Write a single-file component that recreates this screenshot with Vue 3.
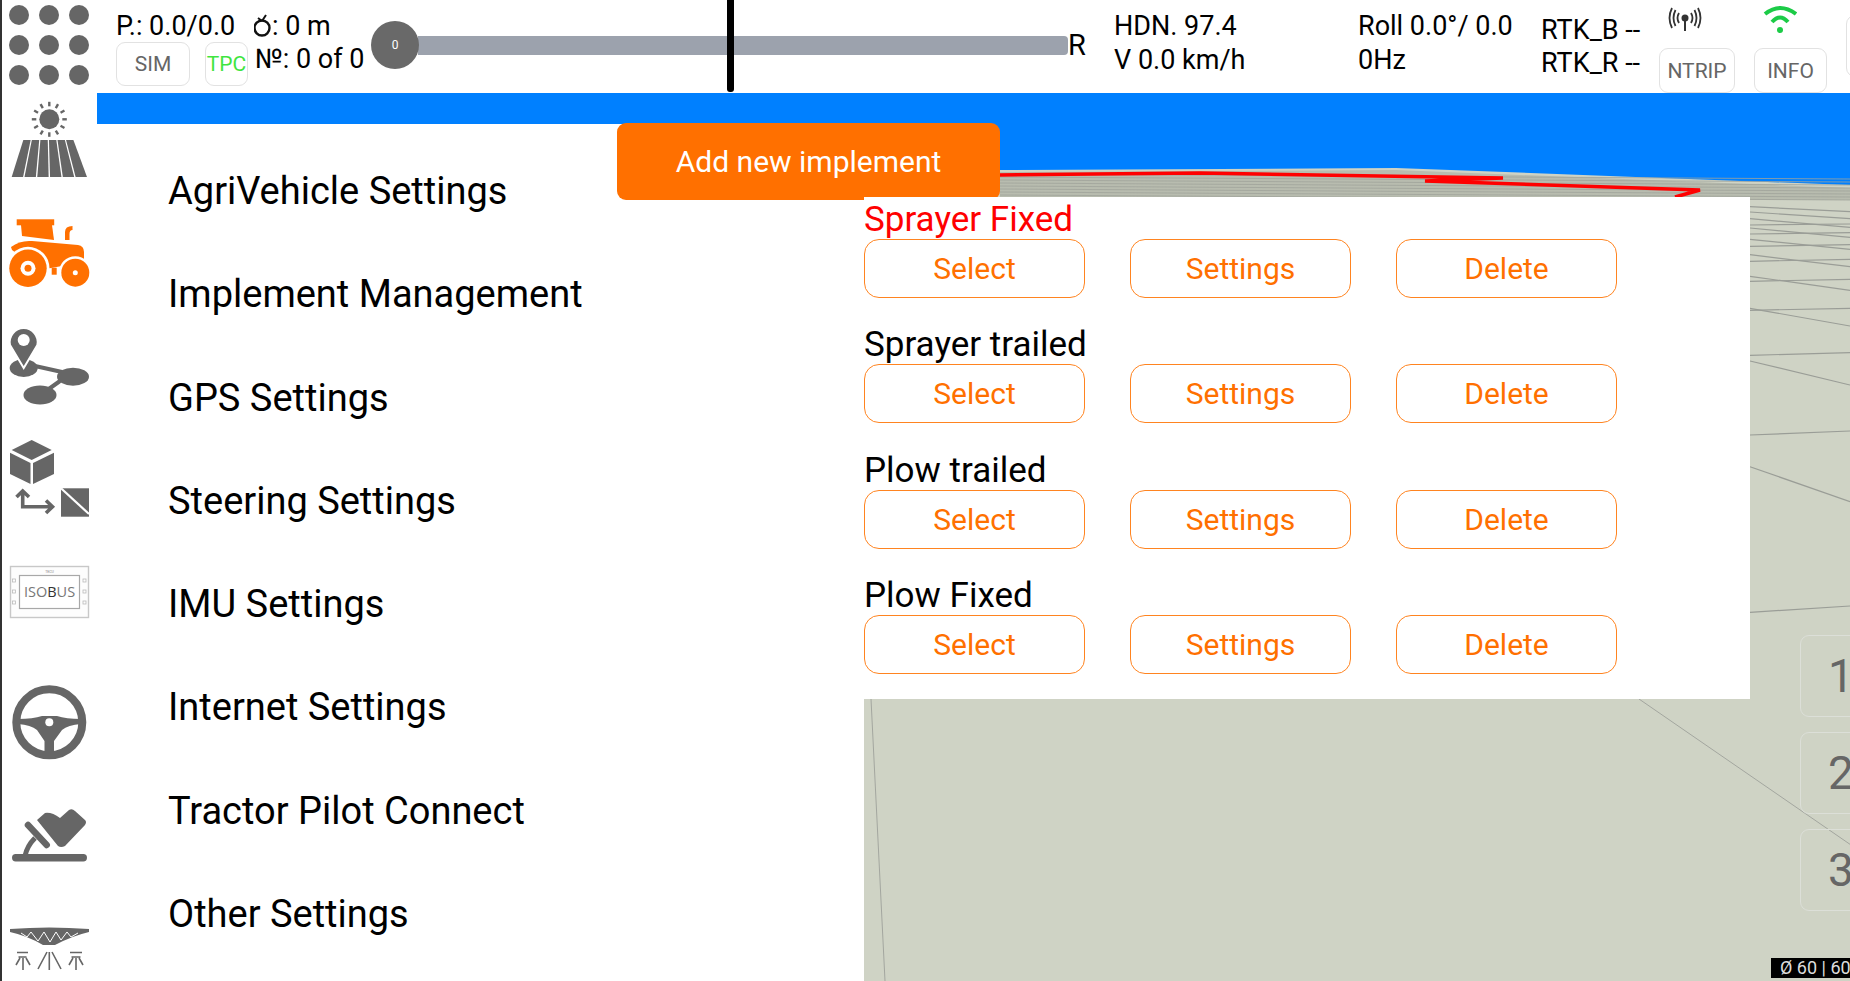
<script setup>
const menuItems = ['AgriVehicle Settings', 'Implement Management', 'GPS Settings', 'Steering Settings', 'IMU Settings', 'Internet Settings', 'Tractor Pilot Connect', 'Other Settings']
const implementsList = [
  { name: 'Sprayer Fixed', active: true },
  { name: 'Sprayer trailed', active: false },
  { name: 'Plow trailed', active: false },
  { name: 'Plow Fixed', active: false }
]
const actions = ['Select', 'Settings', 'Delete']
const sideKeys = ['1', '2', '3']

// sun rays and field strips of the first sidebar icon
const rays = Array.from({ length: 12 }, (_, i) => {
  const a = (i * Math.PI) / 6
  const x = 49.3, y = 119.3
  return { x1: x + Math.cos(a) * 13, y1: y + Math.sin(a) * 13, x2: x + Math.cos(a) * 17.5, y2: y + Math.sin(a) * 17.5 }
})
const strips = Array.from({ length: 6 }, (_, i) => {
  const tw = 51.3 / 6, bw = 76.7 / 6
  const t = 22.7 + tw * i, b = 11 + bw * i
  return `${t + 0.6},140 ${t + tw - 0.6},140 ${b + bw - 0.7},177 ${b + 0.7},177`
})

// perspective grid right of the panel, [y at x=1750, y at x=1850]
const gridLines = [
  [206.7, 211.7], [212, 218.7], [218.7, 227.3], [228, 237.3], [239.3, 249.3], [254.7, 266.7], [276.3, 290.3], [308.3, 326], [361, 385], [466.7, 501.7],
  [225, 224], [234, 232.7], [246.3, 244.7], [261.3, 259.3], [281.3, 279.3], [310.3, 308.3], [355.3, 352.7], [435, 431], [612.3, 606]
]
const bandLines = [174, 177, 180, 183, 186, 189, 192, 195]
</script>

<template>
  <div class="app">
    <header class="topbar">
      <div class="dots">
        <i v-for="n in 9" :key="n"></i>
      </div>
      <div class="stats">
        <div class="stats-row">
          <span class="p-val">P.: 0.0/0.0</span>
          <span class="timer">
            <svg width="18" height="24" viewBox="0 0 18 24"><circle cx="8" cy="14" r="7.5" fill="none" stroke="#111" stroke-width="2.4"/><path d="M8 7 L12 1 M8 7 L4 4" fill="none" stroke="#111" stroke-width="2"/></svg>: 0 m
          </span>
        </div>
        <div class="stats-row second">
          <button class="chip sim">SIM</button>
          <button class="chip tpc">TPC</button>
          <span class="count">№: 0 of 0</span>
        </div>
      </div>
      <div class="slider">
        <div class="knob">0</div>
        <div class="track"></div>
        <div class="marker"></div>
      </div>
      <div class="r-label">R</div>
      <div class="readout">
        <span>HDN. 97.4</span>
        <span>V 0.0 km/h</span>
      </div>
      <div class="readout">
        <span>Roll 0.0°/ 0.0</span>
        <span>0Hz</span>
      </div>
      <div class="readout rtk">
        <span>RTK_B --</span>
        <span>RTK_R --</span>
      </div>
      <div class="status">
        <svg class="status-icon" width="34" height="30" viewBox="0 0 34 30">
          <circle cx="17" cy="13" r="3.5" fill="#333"/>
          <path d="M17 13 V26" stroke="#333" stroke-width="2" fill="none"/>
          <path d="M11 8 Q8 13 11 18 M23 8 Q26 13 23 18 M7.5 5 Q3.5 13 7.5 21 M26.5 5 Q30.5 13 26.5 21 M4 3 Q-1 13 4 23 M30 3 Q35 13 30 23" stroke="#333" stroke-width="1.8" fill="none"/>
        </svg>
        <button class="chip wide">NTRIP</button>
      </div>
      <div class="status">
        <svg class="status-icon" width="34" height="30" viewBox="0 0 34 30">
          <path d="M2 9 Q17 -3 33 9" stroke="#1ccb47" stroke-width="4" fill="none"/>
          <path d="M9 17 Q17 8 25 17" stroke="#1ccb47" stroke-width="4" fill="none"/>
          <circle cx="17" cy="25" r="3" fill="#1ccb47"/>
        </svg>
        <button class="chip wide info">INFO</button>
      </div>
      <button class="chip edge"></button>
    </header>

    <div class="content">
      <nav class="sidebar">
        <svg viewBox="0 93 97 113" width="97" height="113">
          <circle cx="49.3" cy="119.3" r="10" fill="#666"/>
          <line v-for="(r, i) in rays" :key="i" :x1="r.x1" :y1="r.y1" :x2="r.x2" :y2="r.y2" stroke="#666" stroke-width="2.4"/>
          <polygon v-for="(s, i) in strips" :key="i" :points="s" fill="#666"/>
        </svg>
        <svg viewBox="0 206 97 114" width="97" height="114">
          <g fill="#ff7000">
            <rect x="16.7" y="219.3" width="37.5" height="6"/>
            <polygon points="21,225 52,225 54,240 22,236"/>
            <path d="M65 240 V232 Q65 226 72.5 226 V230 Q69.5 230 69.5 234 V240Z"/>
            <path d="M11 247 Q20 240 32 241 L78 245 Q84 246 84 252 V262 L40 270 L12 250Z"/>
            <circle cx="28" cy="268.3" r="21.5" fill="#fff"/>
            <circle cx="75.3" cy="272.7" r="16.5" fill="#fff"/>
            <circle cx="28" cy="268.3" r="18.7"/>
            <circle cx="75.3" cy="272.7" r="14"/>
            <rect x="51.7" y="267.7" width="5" height="7"/>
            <circle cx="28" cy="268.3" r="7.5" fill="#fff"/>
            <circle cx="28" cy="268.3" r="3.5"/>
            <circle cx="75.3" cy="272.7" r="2.5" fill="#fff"/>
          </g>
        </svg>
        <svg viewBox="0 320 97 114" width="97" height="114">
          <g fill="#666">
            <ellipse cx="23.7" cy="368" rx="14" ry="9"/>
            <path d="M23.7 368 L10 345 A14 14 0 1 1 37.4 345Z" stroke="#fff" stroke-width="2"/>
            <circle cx="23.7" cy="340" r="6" fill="#fff"/>
            <path d="M35 366 L62 372 M60 381 L46 391" stroke="#666" stroke-width="4" fill="none"/>
            <ellipse cx="73" cy="376.7" rx="16" ry="9"/>
            <ellipse cx="40" cy="395" rx="16.5" ry="9.5"/>
          </g>
        </svg>
        <svg viewBox="0 434 97 122" width="97" height="122">
          <g fill="#666">
            <polygon points="31.7,440 51.7,450 31.7,460 11.7,450"/>
            <polygon points="10,452.7 30.5,463 30.5,484 10,474"/>
            <polygon points="33,463 54,452.7 54,474 33,484"/>
            <rect x="61" y="488.3" width="28" height="28.4"/>
          </g>
          <path d="M61 488.3 L89 514" stroke="#fff" stroke-width="2.2"/>
          <path d="M16.5 497 L22.7 491 L29 497 M22.7 491 V506.7 H52 M46 500.5 L52.5 506.7 L46 513" fill="none" stroke="#666" stroke-width="3.6"/>
        </svg>
        <svg viewBox="0 556 97 122" width="97" height="122">
          <rect x="10.5" y="566.5" width="78" height="51" fill="#fdfdfd" stroke="#c8c8c8" stroke-width="1.4"/>
          <rect x="19.5" y="575.5" width="60" height="33" fill="#fff" stroke="#a8a8a8" stroke-width="1.2"/>
          <text x="49.5" y="597" text-anchor="middle" class="iso-text">ISO<tspan fill="#333">B</tspan>US</text>
          <text x="49.5" y="573" text-anchor="middle" class="iso-mini">TECU</text>
          <g fill="none" stroke="#bbb" stroke-width="0.8">
            <rect x="12.5" y="579" width="3" height="3"/><rect x="12.5" y="590" width="3" height="3"/><rect x="12.5" y="601" width="3" height="3"/>
            <rect x="83" y="579" width="3" height="3"/><rect x="83" y="590" width="3" height="3"/><rect x="83" y="601" width="3" height="3"/>
          </g>
        </svg>
        <svg viewBox="0 678 97 122" width="97" height="122">
          <circle cx="49.3" cy="722.3" r="33" fill="none" stroke="#666" stroke-width="8"/>
          <path d="M18 719 Q33 719 42 716 H57 Q66 719 81 719 V724 Q68 725 62 730 L54 741 V757 H44.5 V741 L37 730 Q31 725 18 724Z" fill="#666"/>
          <circle cx="49.3" cy="722.3" r="4" fill="#fff"/>
        </svg>
        <svg viewBox="0 800 97 118" width="97" height="118">
          <rect x="12" y="854" width="75" height="7.5" rx="3.7" fill="#666"/>
          <path d="M25 856 Q27 846 35 838" stroke="#666" stroke-width="5" fill="none"/>
          <path d="M28 825 L46.7 845" stroke="#666" stroke-width="6.5" stroke-linecap="round"/>
          <path d="M37 820 L45 813 Q52 812 60 818 L69 810 Q72 808 75 811 L85 820 Q87 822 85 825 L65 846 Q61 848 58 846Z" fill="#666"/>
        </svg>
        <svg viewBox="0 918 97 63" width="97" height="63">
          <path d="M10 929 Q49 926 89 929 V932 Q72 936 55 945 H43 Q28 936 10 932Z" fill="#666"/>
          <path d="M21 933 L27 937 L31 932 L38 941 L44 932 L50 942 L56 932 L61 940 L67 932 L71 937 L78 933" fill="none" stroke="#fff" stroke-width="1"/>
          <g stroke="#666" stroke-width="1.6" fill="none">
            <path d="M17 952.5 H28 M18.5 957 H26.5 M23 958 V970 M20 958 L16 965 M26 958 L30 965"/>
            <path d="M47 952 L38 969 M49.3 952 V970 M52 952 L61 969"/>
            <path d="M70 952.5 H82 M71.5 957 H80.5 M76 958 V970 M73 958 L69 965 M79 958 L83 965"/>
          </g>
        </svg>
      </nav>

      <main class="main">
        <svg class="scene" viewBox="97 93 1753 888" preserveAspectRatio="none">
          <rect x="97" y="93" width="1753" height="888" fill="#0080ff"/>
          <polygon points="864,171 1000,170 1396,168 1850,185 1850,981 864,981" fill="#cfd3c5"/>
          <polygon points="1000,172 1396,170 1850,188 1850,200 1000,200" fill="#b8bcaf"/>
          <line v-for="y in bandLines" :key="y" x1="1000" :y1="y" x2="1850" :y2="y + 5" stroke="#a0a39b" stroke-width="0.8"/>
          <line v-for="(g, i) in gridLines" :key="i" x1="1750" :y1="g[0]" x2="1850" :y2="g[1]" stroke="#9a9d97" stroke-width="1.2"/>
          <line x1="1639" y1="699" x2="1851" y2="845" stroke="#a3a69f" stroke-width="1"/>
          <line x1="871" y1="699" x2="885" y2="981" stroke="#a3a69f" stroke-width="1"/>
          <polyline points="1000,175 1200,173 1503,178 1425,181 1700,190 1675,197" fill="none" stroke="#ff0000" stroke-width="3.5"/>
        </svg>

        <section class="menu">
          <button class="add-btn">Add new implement</button>
          <ul class="menu-list">
            <li v-for="item in menuItems" :key="item">{{ item }}</li>
          </ul>
        </section>

        <section class="stage">
          <div class="panel">
            <div v-for="impl in implementsList" :key="impl.name" class="impl">
              <div class="impl-name" :class="{ active: impl.active }">{{ impl.name }}</div>
              <div class="impl-actions">
                <button v-for="a in actions" :key="a" class="action">{{ a }}</button>
              </div>
            </div>
          </div>
        </section>

        <div class="side-keys">
          <button v-for="k in sideKeys" :key="k" class="side-key">{{ k }}</button>
        </div>
        <div class="fps">Ø 60 | 60</div>
      </main>
    </div>
  </div>
</template>

<style>
html, body {
  margin: 0;
  background: #fff;
  overflow: hidden;
}
</style>

<style scoped>
.app {
  width: 1850px;
  height: 981px;
  display: flex;
  flex-direction: column;
  overflow: hidden;
  font-family: Roboto, "Liberation Sans", sans-serif;
  color: #000;
  background: #fff;
  position: relative;
  box-shadow: inset 2px 0 0 #333;
}
button {
  font-family: inherit;
  background: #fff;
  padding: 0;
  cursor: pointer;
}

/* top bar */
.topbar {
  height: 93px;
  flex: none;
  display: grid;
  grid-template-columns: 116px 254px 698px 46px 244px 183px 118px 95px 92px 4px;
  font-size: 27px;
  line-height: 34px;
}
.dots {
  display: grid;
  grid-template-columns: repeat(3, 20px);
  grid-auto-rows: 20px;
  gap: 10px;
  padding: 5px 0 0 9px;
}
.dots i {
  background: #666;
  border-radius: 50%;
}
.stats {
  padding-top: 9px;
}
.stats-row {
  display: flex;
  white-space: nowrap;
}
.p-val {
  width: 138px;
}
.timer {
  display: flex;
  align-items: center;
}
.second {
  margin-top: -1px;
  align-items: flex-start;
}
.chip {
  border: 1.5px solid #e2e2e2;
  border-radius: 9px;
  color: #666;
  font-size: 21px;
  box-sizing: border-box;
}
.sim {
  width: 74px;
  height: 44px;
  margin-right: 15px;
}
.tpc {
  width: 43px;
  height: 44px;
  margin-right: 7px;
  color: #3fe53f;
  overflow: visible;
  white-space: nowrap;
}
.slider {
  position: relative;
  display: flex;
  align-items: center;
  height: 90px;
  padding-left: 1px;
}
.knob {
  width: 48px;
  height: 48px;
  border-radius: 50%;
  background: #696969;
  color: #fff;
  font-size: 12px;
  line-height: 48px;
  text-align: center;
  flex: none;
  z-index: 1;
}
.track {
  flex: 1;
  height: 19px;
  margin-left: -1px;
  background: #9ca2ad;
  border-radius: 0 4px 4px 0;
}
.marker {
  position: absolute;
  left: 357px;
  top: 0;
  width: 7px;
  height: 92px;
  background: #000;
  border-radius: 0 0 3px 3px;
  z-index: 2;
}
.r-label {
  font-size: 29px;
  line-height: 90px;
}
.readout {
  display: flex;
  flex-direction: column;
  padding-top: 9px;
  white-space: nowrap;
}
.rtk {
  padding-top: 14px;
  line-height: 33px;
}
.status {
  position: relative;
}
.status-icon {
  position: absolute;
  left: 9px;
  top: 5px;
}
.wide {
  position: absolute;
  left: 0;
  top: 48px;
  width: 76px;
  height: 45px;
}
.info {
  width: 73px;
}
.edge {
  width: 20px;
  height: 62px;
  margin-top: 15px;
}

/* body */
.content {
  flex: 1;
  display: flex;
  min-height: 0;
}
.sidebar {
  width: 97px;
  flex: none;
  display: flex;
  flex-direction: column;
}
.sidebar svg {
  display: block;
  flex: none;
}
.iso-text {
  font-family: "Open Sans", Roboto, sans-serif;
  font-size: 14.5px;
  fill: #777;
}
.iso-mini {
  font-size: 3.5px;
  fill: #888;
}
.main {
  flex: 1;
  position: relative;
  display: flex;
  min-width: 0;
}
.scene {
  position: absolute;
  inset: 0;
  width: 100%;
  height: 100%;
}
.menu {
  position: relative;
  width: 767px;
  margin-top: 31px;
  background: #fff;
}
.add-btn {
  position: absolute;
  left: 520px;
  top: -1px;
  width: 383px;
  height: 77px;
  border: 0;
  border-radius: 9px;
  background: #ff7000;
  color: #fff;
  font-size: 30px;
}
.menu-list {
  list-style: none;
  margin: 0;
  padding: 16px 0 0 71px;
  font-size: 38px;
}
.menu-list li {
  height: 103.3px;
  line-height: 103.3px;
}
.stage {
  position: relative;
  flex: 1;
  padding-top: 104px;
}
.panel {
  width: 886px;
  height: 502px;
  background: #fff;
  position: relative;
  box-sizing: border-box;
}
.impl {
  height: 125.3px;
}
.impl-name {
  font-size: 35px;
  line-height: 45px;
  height: 42px;
}
.impl-name.active {
  color: #ff0000;
}
.impl-actions {
  display: flex;
  gap: 45px;
}
.action {
  width: 221px;
  height: 59px;
  border: 1.5px solid #ff8420;
  border-radius: 15px;
  color: #ff7000;
  font-size: 30px;
  box-sizing: border-box;
}
.side-keys {
  position: absolute;
  left: 1703px;
  top: 542px;
  display: flex;
  flex-direction: column;
  gap: 15px;
}
.side-key {
  width: 82px;
  height: 82px;
  background: transparent;
  border: 1.5px solid #dcdfd8;
  border-radius: 9px;
  color: #666;
  font-size: 46px;
}
.fps {
  position: absolute;
  left: 1674px;
  top: 865px;
  width: 79px;
  height: 20px;
  padding-left: 9px;
  box-sizing: border-box;
  background: #000;
  color: #ddd;
  font-size: 18px;
  line-height: 20px;
  white-space: nowrap;
  overflow: hidden;
}
</style>
